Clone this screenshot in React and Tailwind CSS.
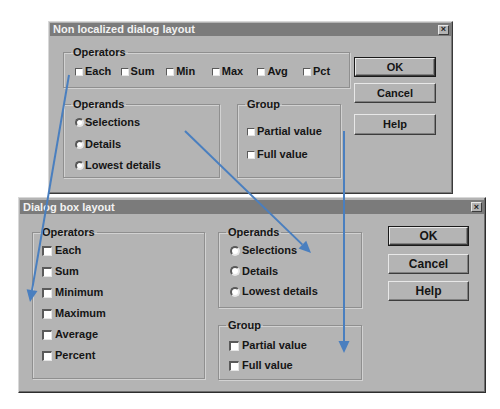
import React from 'react';

const sunken =
  'bg-white border-t-[#5a5a5a] border-l-[#5a5a5a] border-r-[#e6e6e6] border-b-[#e6e6e6]';

const Check = ({ label, big }) => (
  <div className="flex items-center h-[13px]">
    <span
      className={`${sunken} ${big ? 'w-[10px] h-[10px] border-t-2 border-l-2 border-r border-b mr-[3px]' : 'w-[8px] h-[8px] border mr-[2px]'}`}
    />
    <span>{label}</span>
  </div>
);

const Radio = ({ label, big }) => (
  <div className="flex items-center h-[13px]">
    <span
      className={`rounded-full ${sunken} ${big ? 'w-[10px] h-[10px] border-2 mr-[2px]' : 'w-[9px] h-[9px] border-2 mr-[1px]'}`}
    />
    <span>{label}</span>
  </div>
);

const Group = ({ title, className = '', children }) => (
  <fieldset
    className={`border border-[#8f8f8f] shadow-[inset_1px_1px_0_#d2d2d2,1px_1px_0_#d2d2d2] ${className}`}
  >
    <legend className="ml-[7px] px-[2px] leading-[13px]">{title}</legend>
    {children}
  </fieldset>
);

const Button = ({ label, primary, h = 'h-[20px]' }) => (
  <div
    className={`${h} flex items-center justify-center bg-[#b4b4b4] ${
      primary ? 'border border-[#1a1a1a]' : ''
    }`}
  >
    <div className="w-full h-full flex items-center justify-center border border-t-[#e8e8e8] border-l-[#e8e8e8] border-r-[#3c3c3c] border-b-[#3c3c3c] shadow-[inset_-1px_-1px_0_#808080]">
      {label}
    </div>
  </div>
);

const TitleBar = ({ title, className }) => (
  <div className={`flex items-center justify-between bg-[#7b7b7b] text-[#f2f2f2] pl-[3px] pr-[2px] ${className}`}>
    <span className="leading-none">{title}</span>
    <span className="w-[11px] h-[10px] flex items-center justify-center bg-[#b4b4b4] border border-t-[#e8e8e8] border-l-[#e8e8e8] border-r-[#3c3c3c] border-b-[#3c3c3c] text-[#222] text-[9px] leading-none">
      ×
    </span>
  </div>
);

const arrow = (x1, y1, x2, y2) => {
  const a = Math.atan2(y2 - y1, x2 - x1);
  const len = 12;
  const w = 5.5;
  const bx = x2 - len * Math.cos(a);
  const by = y2 - len * Math.sin(a);
  const px = -Math.sin(a) * w;
  const py = Math.cos(a) * w;
  return {
    line: { x1, y1, x2: bx, y2: by },
    head: `${x2},${y2} ${bx + px},${by + py} ${bx - px},${by - py}`,
  };
};

const arrows = [arrow(69, 75, 30, 302), arrow(185, 131, 311, 253), arrow(344, 131, 344, 353)];

export default function App() {
  return (
    <div className="relative w-[500px] h-[409px] bg-white overflow-hidden flex flex-col font-['Liberation_Sans',Arial,sans-serif] font-bold text-[11px] text-[#151515]">
      {/* Non localized dialog */}
      <div className="ml-[48px] mt-[21px] w-[405px] h-[173px] shrink-0 bg-[#b4b4b4] border border-t-[#d8d8d8] border-l-[#d8d8d8] border-r-[#3a3a3a] border-b-[#3a3a3a] shadow-[inset_-1px_-1px_0_#7a7a7a] flex flex-col">
        <TitleBar title="Non localized dialog layout" className="mx-[1px] mt-[1px] h-[13px]" />
        <div className="flex pl-[14px] pt-[10px]">
          <div className="flex flex-col w-[278px]">
            <Group title="Operators" className="h-[42px]">
              <div className="flex pl-[11px] pt-[6px]">
                {['Each', 'Sum', 'Min', 'Max', 'Avg', 'Pct'].map((l) => (
                  <div key={l} className="w-[45.6px]">
                    <Check label={l} />
                  </div>
                ))}
              </div>
            </Group>
            <div className="flex gap-[17px] mt-[10px]">
              <Group title="Operands" className="w-[157px] h-[80px]">
                <div className="flex flex-col gap-[8.5px] pl-[11px] pt-[5px]">
                  <Radio label="Selections" />
                  <Radio label="Details" />
                  <Radio label="Lowest details" />
                </div>
              </Group>
              <Group title="Group" className="w-[104px] h-[80px]">
                <div className="flex flex-col gap-[10px] pl-[9px] pt-[14px]">
                  <Check label="Partial value" />
                  <Check label="Full value" />
                </div>
              </Group>
            </div>
          </div>
          <div className="ml-[13px] pt-[11px] w-[82px] flex flex-col">
            <Button label="OK" primary />
            <div className="mt-[6px]">
              <Button label="Cancel" />
            </div>
            <div className="mt-[11px]">
              <Button label="Help" h="h-[21px]" />
            </div>
          </div>
        </div>
      </div>

      {/* Dialog box layout */}
      <div className="ml-[18px] mt-[3px] w-[468px] h-[196px] shrink-0 bg-[#b4b4b4] border border-t-[#d8d8d8] border-l-[#d8d8d8] border-r-[#2e2e2e] border-b-[#2e2e2e] shadow-[inset_-1px_-1px_0_#6e6e6e] flex flex-col">
        <TitleBar title="Dialog box layout" className="mx-[1px] mt-[2px] h-[14px]" />
        <div className="flex pl-[13px] pt-[12px]">
          <Group title="Operators" className="w-[173px] h-[153px]">
            <div className="flex flex-col gap-[8px] pl-[9px] pt-[5px]">
              {['Each', 'Sum', 'Minimum', 'Maximum', 'Average', 'Percent'].map((l) => (
                <Check key={l} label={l} big />
              ))}
            </div>
          </Group>
          <div className="ml-[13px] flex flex-col">
            <Group title="Operands" className="w-[144px] h-[82px]">
              <div className="flex flex-col gap-[7.5px] pl-[11px] pt-[5px]">
                <Radio label="Selections" big />
                <Radio label="Details" big />
                <Radio label="Lowest details" big />
              </div>
            </Group>
            <Group title="Group" className="w-[144px] h-[61px] mt-[11px]">
              <div className="flex flex-col gap-[7px] pl-[10px] pt-[7px]">
                <Check label="Partial value" big />
                <Check label="Full value" big />
              </div>
            </Group>
          </div>
          <div className="ml-[26px] w-[81px] flex flex-col text-[12px]">
            <Button label="OK" primary />
            <div className="mt-[8px]">
              <Button label="Cancel" />
            </div>
            <div className="mt-[7px]">
              <Button label="Help" />
            </div>
          </div>
        </div>
      </div>

      {/* Blue annotation arrows */}
      <svg className="absolute inset-0 pointer-events-none" width="500" height="409" viewBox="0 0 500 409">
        {arrows.map((a, i) => (
          <g key={i}>
            <line {...a.line} stroke="#4a7fbf" strokeWidth="2" />
            <polygon points={a.head} fill="#4a7fbf" />
          </g>
        ))}
      </svg>
    </div>
  );
}
